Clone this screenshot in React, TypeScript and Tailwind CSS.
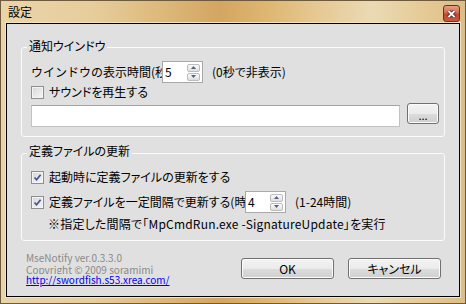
import React from 'react';

function CheckBox({ checked }: { checked?: boolean }) {
    return (
        <span className="relative block w-[13px] h-[13px] shrink-0 border border-[#8e8f8f] bg-[linear-gradient(135deg,#d6d6d6,#f7f7f7)] shadow-[inset_0_0_0_1px_#f4f4f4]">
            {checked && (
                <svg className="absolute inset-0" width="11" height="11" viewBox="0 0 11 11">
                    <path d="M2.5 5.5 L4.6 7.8 L8.6 2.8" fill="none" stroke="#3f5493" strokeWidth="1.7" />
                </svg>
            )}
        </span>
    );
}

function SpinBtn({ up }: { up?: boolean }) {
    return (
        <span className="flex w-[13px] h-[8px] items-center justify-center rounded-[2px] border border-[#bcbcbc] bg-[linear-gradient(#fbfbfb,#dfdfdf)]">
            <svg width="5" height="3" viewBox="0 0 5 3">
                <path d={up ? 'M0 3L2.5 0L5 3Z' : 'M0 0L2.5 3L5 0Z'} fill="#4c6286" />
            </svg>
        </span>
    );
}

function Spin({ value }: { value: string }) {
    return (
        <div className="flex w-[41px] h-[22px] shrink-0 items-center border border-[#a9a9a9] bg-white">
            <span className="flex-1 pl-[2px] text-[12px] leading-none">{value}</span>
            <div className="flex flex-col gap-px pr-[2px]">
                <SpinBtn up />
                <SpinBtn />
            </div>
        </div>
    );
}

function Btn({ children, className }: { children: React.ReactNode; className?: string }) {
    return (
        <div
            className={
                'flex h-[21px] items-center justify-center rounded-[3px] border border-[#707070] bg-[linear-gradient(#f3f3f3_0%,#ebebeb_50%,#dddddd_50%,#cfcfcf_100%)] shadow-[inset_0_0_0_1px_#fbfbfb] text-[12px] ' +
                (className || '')
            }
        >
            {children}
        </div>
    );
}

export default function App() {
    return (
        <div className="w-[466px] h-[304px] flex flex-col border border-[#6e5a3d] bg-[linear-gradient(90deg,#e9d4aa_0%,#e7cd9b_20%,#dcb87a_35%,#d3a661_47%,#ddb671_57%,#e6c892_68%,#eadab4_80%,#e5c993_92%,#dcbd86_100%)] font-['Noto_Sans_CJK_JP',sans-serif] [font-feature-settings:'palt'] text-black">
            {/* title bar */}
            <div className="h-[21px] flex items-start justify-between pl-[7px] pr-[5px]">
                <span className="text-[12px] leading-[21px]">設定</span>
                <div className="mt-[4px] flex w-[17px] h-[17px] items-center justify-center rounded-[3px] border border-[#6e2f22] bg-[linear-gradient(#e6a08c_0%,#d46a52_45%,#bf4630_55%,#c85a40_100%)]">
                    <svg width="9" height="8" viewBox="0 0 9 8">
                        <path d="M1.5 1 L7.5 7 M7.5 1 L1.5 7" stroke="#3b1a12" strokeWidth="3.4" />
                        <path d="M1.5 1 L7.5 7 M7.5 1 L1.5 7" stroke="#ffffff" strokeWidth="1.8" />
                    </svg>
                </div>
            </div>

            <div className="flex-1 flex mx-[4px] mb-[5px] border border-[#f3e4c5]">
                <div className="flex-1 flex flex-col border border-black bg-[#e0e0e0] px-[14px] pt-[14px] text-[12px]">
                    {/* 通知ウインドウ */}
                    <fieldset className="border border-[#fbfbfb] rounded-[3px] pb-[9px]">
                        <legend className="ml-[5px] px-[2px] pb-[2px] leading-[16px]">通知ウインドウ</legend>
                        <div className="flex flex-col pt-[5px] pl-[9px] pr-[4px]">
                            <div className="flex h-[22px] items-center">
                                <span className="w-[131px] overflow-hidden whitespace-nowrap [font-feature-settings:normal]">ウインドウの表示時間(秒)</span>
                                <Spin value="5" />
                                <span className="ml-[9px]">(0秒で非表示)</span>
                            </div>
                            <div className="mt-px flex h-[16px] items-center gap-[5px]">
                                <CheckBox />
                                <span>サウンドを再生する</span>
                            </div>
                            <div className="mt-[3px] flex items-start gap-[7px]">
                                <div className="mt-[2px] w-[369px] h-[22px] border border-[#c2c2c2] border-t-[#a3a3a3] bg-white" />
                                <Btn className="w-[32px]">
                                    <span className="pt-[4px] text-[11px] leading-none">...</span>
                                </Btn>
                            </div>
                        </div>
                    </fieldset>

                    {/* 定義ファイルの更新 */}
                    <fieldset className="mt-[6px] border border-[#fbfbfb] rounded-[3px] pb-[8px]">
                        <legend className="ml-[5px] px-[2px] pb-[4px] leading-[16px]">定義ファイルの更新</legend>
                        <div className="flex flex-col pt-[6px] pl-[9px]">
                            <div className="flex h-[16px] items-center gap-[5px]">
                                <CheckBox checked />
                                <span>起動時に定義ファイルの更新をする</span>
                            </div>
                            <div className="mt-[6px] flex h-[22px] items-center">
                                <CheckBox checked />
                                <span className="ml-[5px] w-[196px] overflow-hidden whitespace-nowrap">定義ファイルを一定間隔で更新する(時間)</span>
                                <Spin value="4" />
                                <span className="ml-[9px]">(1-24時間)</span>
                            </div>
                            <div className="mt-[3px] h-[16px] pl-[17px] leading-[16px] tracking-[0.2px]">
                                ※指定した間隔で「MpCmdRun.exe -SignatureUpdate」を実行
                            </div>
                        </div>
                    </fieldset>

                    {/* footer */}
                    <div className="mt-[11px] flex items-start justify-between">
                        <div className="flex flex-col pl-[5px] text-[10px] leading-[12px]">
                            <span className="text-[#8a8a8a]">MseNotify ver.0.3.3.0</span>
                            <div className="h-[10px] overflow-hidden text-[#8a8a8a]">Copyright © 2009 soramimi</div>
                            <span className="text-[#0000ee] underline">http://swordfish.s53.xrea.com/</span>
                        </div>
                        <div className="mt-[6px] mr-[4px] flex gap-[14px]">
                            <Btn className="w-[93px]">OK</Btn>
                            <Btn className="w-[93px]">キャンセル</Btn>
                        </div>
                    </div>
                </div>
            </div>
        </div>
    );
}
